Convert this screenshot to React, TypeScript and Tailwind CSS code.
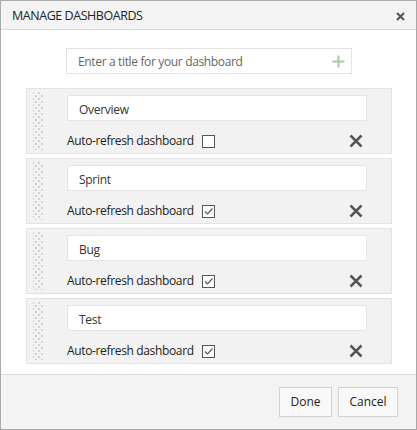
import React from 'react';

interface Dashboard {
  name: string;
  autoRefresh: boolean;
}

const dashboards: Dashboard[] = [
  { name: 'Overview', autoRefresh: false },
  { name: 'Sprint', autoRefresh: true },
  { name: 'Bug', autoRefresh: true },
  { name: 'Test', autoRefresh: true },
];

const Grip = () => (
  <svg width="12" height="58" className="shrink-0">
    <defs>
      <pattern id="grip" width="6" height="6" patternUnits="userSpaceOnUse">
        <rect x="0" y="0" width="2" height="2" fill="#d2d2d2" />
        <rect x="3" y="3" width="2" height="2" fill="#d2d2d2" />
      </pattern>
    </defs>
    <rect x="1" y="0" width="10" height="58" fill="url(#grip)" />
  </svg>
);

const Checkbox = ({ checked }: { checked: boolean }) => (
  <span className="w-[13px] h-[13px] border border-[#555] bg-white flex items-center justify-center">
    {checked && (
      <svg width="11" height="11" viewBox="0 0 11 11">
        <path d="M2 5.5 L4.5 8 L9.5 2.5" fill="none" stroke="#555" strokeWidth="1.2" />
      </svg>
    )}
  </span>
);

const DashboardRow = ({ data }: { data: Dashboard }) => (
  <div className="h-[66px] border border-[#e3e3e3] bg-[#f2f2f2] flex">
    <div className="pl-[5px] pt-[3px]">
      <Grip />
    </div>
    <div className="ml-[23px] pt-[6px] flex-1">
      <div className="w-[300px] h-[26px] bg-white border border-[#e6e6e6] flex items-center pl-[11px] pt-[4px] text-[12px] text-[#333] tracking-[-0.3px]">
        {data.name}
      </div>
      <div className="flex items-center mt-[11px] pr-[28px]">
        <span className="text-[12px] text-[#222] tracking-[-0.35px]">Auto-refresh dashboard</span>
        <span className="ml-[8px]">
          <Checkbox checked={data.autoRefresh} />
        </span>
        <svg width="14" height="14" viewBox="0 0 14 14" className="ml-auto">
          <path d="M1.5 1.5 L12.5 12.5 M12.5 1.5 L1.5 12.5" stroke="#555" strokeWidth="2.5" />
        </svg>
      </div>
    </div>
  </div>
);

export default function App() {
  return (
    <div
      className="w-[417px] h-[430px] border border-[#a9a9a9] bg-white flex flex-col"
      style={{ fontFamily: '"Open Sans", "Noto Sans", sans-serif' }}
    >
      <div className="h-[29px] shrink-0 bg-[#f3f3f3] border-b border-[#dcdcdc] flex items-center justify-between pl-[11px] pr-[11px] pt-[2px]">
        <span className="text-[12.5px] text-[#222] tracking-[-0.45px]">MANAGE DASHBOARDS</span>
        <svg width="9" height="9" viewBox="0 0 9 9">
          <path d="M1 1 L8 8 M8 1 L1 8" stroke="#555" strokeWidth="2" />
        </svg>
      </div>

      <div className="flex-1 pt-[18px]">
        <div className="ml-[65px] w-[286px] h-[26px] border border-[#e2e2e2] flex items-center pl-[11px] pr-[6px]">
          <span className="text-[12px] text-[#666] flex-1 pt-[2px] tracking-[-0.35px]">Enter a title for your dashboard</span>
          <svg width="13" height="13" viewBox="0 0 13 13">
            <path d="M6.5 0.5 V12.5 M0.5 6.5 H12.5" stroke="#9fcf9f" strokeWidth="2" />
          </svg>
        </div>

        <div className="ml-[25px] w-[366px] mt-[14px] flex flex-col gap-[4px]">
          {dashboards.map((d) => (
            <DashboardRow key={d.name} data={d} />
          ))}
        </div>
      </div>

      <div className="h-[55px] shrink-0 bg-[#f3f3f3] border-t border-[#dcdcdc] flex items-center justify-end gap-[6px] pr-[18px]">
        <button className="w-[53px] h-[30px] border border-[#d2d2d2] bg-[#f8f8f8] text-[12px] text-[#222]">
          Done
        </button>
        <button className="w-[60px] h-[30px] border border-[#d2d2d2] bg-[#f8f8f8] text-[12px] text-[#222]">
          Cancel
        </button>
      </div>
    </div>
  );
}
